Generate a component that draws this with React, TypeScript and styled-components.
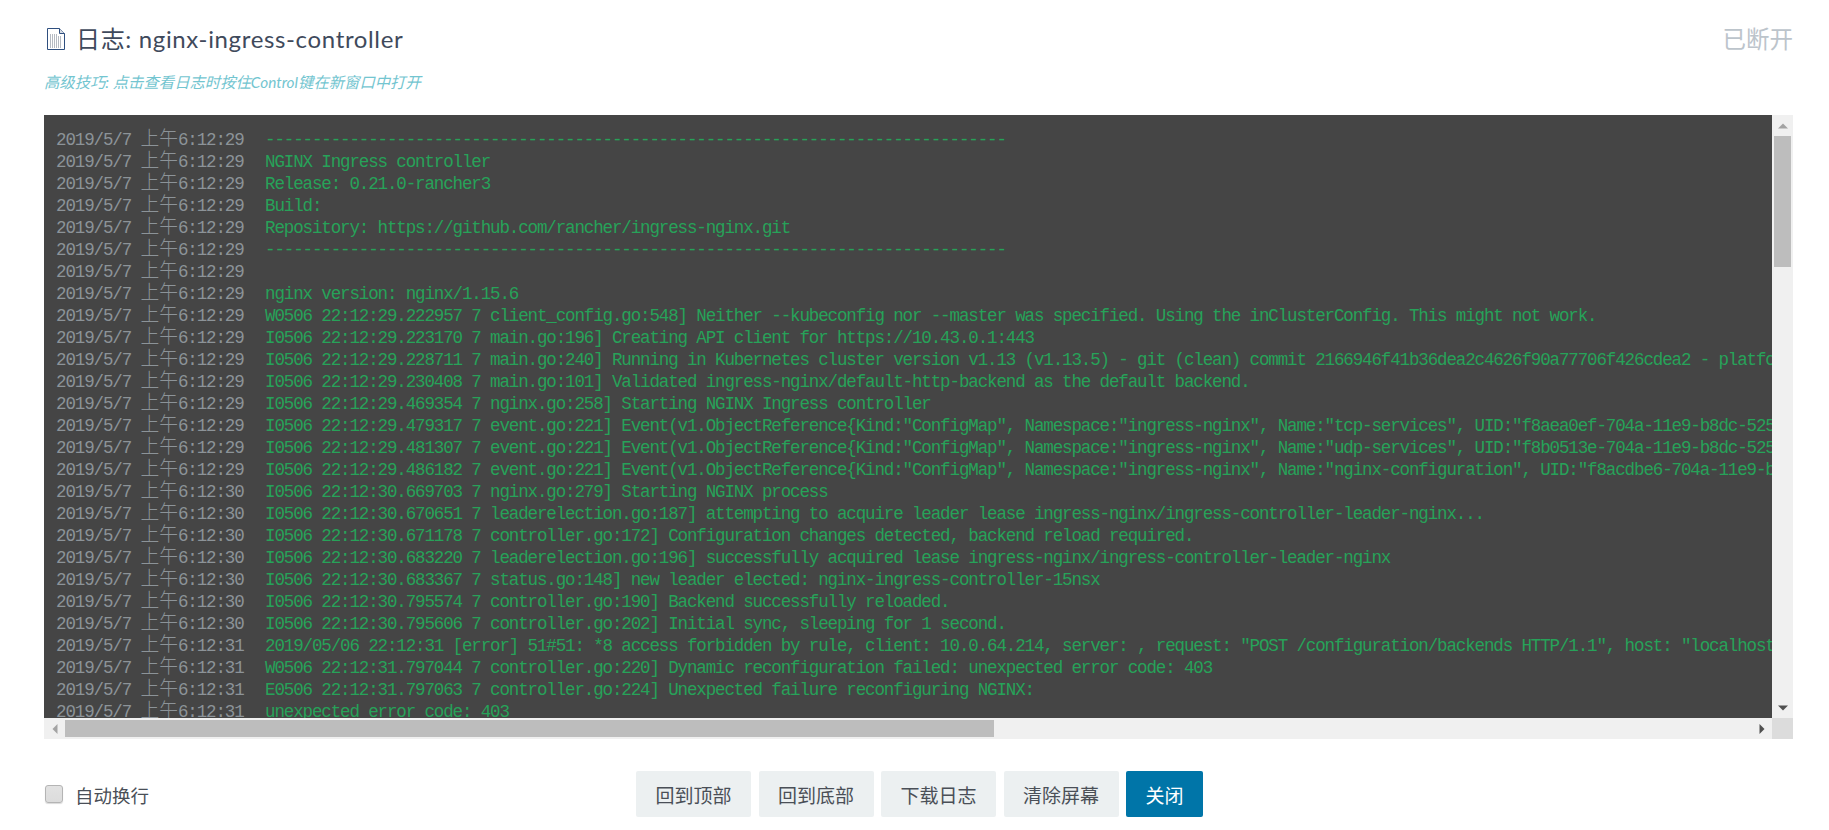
import React from 'react';
import styled, { createGlobalStyle } from 'styled-components';

const CJK = '"Noto Sans CJK SC"';

const GlobalStyle = createGlobalStyle`
  html, body {
    margin: 0;
    padding: 0;
    background: #fff;
  }
`;

const Page = styled.div`
  width: 1829px;
  height: 830px;
  box-sizing: border-box;
  padding: 0 36px 0 44px;
  overflow: hidden;
  font-family: Lato, ${CJK}, sans-serif;
`;

const Header = styled.header`
  height: 70px;
  display: flex;
  align-items: flex-end;
  justify-content: space-between;
  padding-bottom: 17px;
  box-sizing: border-box;
`;

const Title = styled.h1`
  margin: 0;
  padding-left: 3px;
  display: flex;
  align-items: center;
  gap: 11px;
  font-size: 24px;
  font-weight: 400;
  line-height: 28px;
  letter-spacing: 0.65px;
  color: #3f4a5c;
`;

const Status = styled.span`
  font-size: 23.5px;
  line-height: 28px;
  color: #bcc4cb;
`;

const Hint = styled.p`
  margin: 3px 0 0;
  height: 18px;
  font-size: 15.35px;
  line-height: 18px;
  font-style: italic;
  color: #73c5d0;
`;

const LogFrame = styled.div`
  margin-top: 24px;
  display: grid;
  grid-template-columns: 1728px 21px;
  grid-template-rows: 603px 21px;
  width: 1749px;
`;

const LogBody = styled.div`
  background: #454545;
  overflow: hidden;
  padding: 14px 0 0 12px;
  box-sizing: border-box;
`;

const Row = styled.div`
  display: flex;
  height: 22px;
  line-height: 22px;
  white-space: pre;
  font-family: "Liberation Mono", ${CJK}, monospace;
  font-size: 17.5px;
  letter-spacing: -1.125px;
`;

const Stamp = styled.span`
  flex: none;
  width: 209px;
  color: #8c9398;
`;

const Meridiem = styled.span`
  font-size: 18.75px;
  font-weight: 300;
  letter-spacing: 0;
`;

const Message = styled.span`
  color: #27a259;
`;

const ScrollTrack = styled.div<{ $vertical?: boolean }>`
  background: #f0f0f0;
  display: flex;
  flex-direction: ${(p) => (p.$vertical ? 'column' : 'row')};
  align-items: center;
`;

const ScrollArrow = styled.div<{ $vertical?: boolean }>`
  flex: none;
  width: ${(p) => (p.$vertical ? '17px' : '21px')};
  height: ${(p) => (p.$vertical ? '21px' : '17px')};
  display: flex;
  align-items: center;
  justify-content: center;
`;

const ScrollThumb = styled.div<{ $length: number; $vertical?: boolean }>`
  flex: none;
  background: #bdbdbd;
  ${(p) =>
    p.$vertical
      ? `width: 17px; height: ${p.$length}px;`
      : `height: 17px; width: ${p.$length}px;`}
`;

const Spacer = styled.div`
  flex: 1;
`;

const ScrollCorner = styled.div`
  background: #dcdcdc;
`;

const Footer = styled.footer`
  display: flex;
  align-items: flex-start;
  padding-top: 32px;
`;

const WrapToggle = styled.label`
  flex: none;
  width: 592px;
  display: flex;
  align-items: center;
  gap: 12px;
  padding-top: 12px;
  padding-left: 1px;
  box-sizing: border-box;
  font-size: 18.5px;
  line-height: 26px;
  color: #4a4f57;
`;

const CheckBox = styled.span`
  flex: none;
  width: 18px;
  height: 18px;
  margin-top: -5px;
  box-sizing: border-box;
  border: 1px solid #b4b4b4;
  border-radius: 3px;
  background: linear-gradient(#e2e2e2, #dcdcdc);
  box-shadow: 0 1px 1px rgba(0, 0, 0, 0.15);
`;

const Buttons = styled.div`
  display: flex;
  gap: 7.5px;
`;

const Button = styled.button<{ $primary?: boolean }>`
  height: 46px;
  padding: 0 19.5px;
  border: none;
  border-radius: 2px;
  font-family: Lato, ${CJK}, sans-serif;
  font-size: 19px;
  background: ${(p) => (p.$primary ? '#0075a8' : '#ecf0f1')};
  color: ${(p) => (p.$primary ? '#fff' : '#4a4f57')};
`;

const DocIcon = () => (
  <svg width="18" height="22" viewBox="0 0 18 22" fill="none">
    <path d="M.5.5h12l5 5v16H.5z" fill="#fff" stroke="#2f4f7f" />
    <path d="M12.5.5v5h5" fill="#d5dbe4" stroke="#2f4f7f" />
    <path
      d="M3 7h8M3 9h12M3 11h12M3 13h12M3 15h12M3 17h12M3 19h12"
      stroke="#6d7685"
      strokeDasharray="1 1"
    />
  </svg>
);

const Tri = ({ d, fill }: { d: string; fill: string }) => (
  <svg width="10" height="10" viewBox="0 0 10 10">
    <path d={d} fill={fill} />
  </svg>
);

const dashes = '-'.repeat(79);

const rows: [string, string][] = [
  ['29', dashes],
  ['29', 'NGINX Ingress controller'],
  ['29', 'Release: 0.21.0-rancher3'],
  ['29', 'Build:'],
  ['29', 'Repository: https://github.com/rancher/ingress-nginx.git'],
  ['29', dashes],
  ['29', ''],
  ['29', 'nginx version: nginx/1.15.6'],
  ['29', 'W0506 22:12:29.222957 7 client_config.go:548] Neither --kubeconfig nor --master was specified. Using the inClusterConfig. This might not work.'],
  ['29', 'I0506 22:12:29.223170 7 main.go:196] Creating API client for https://10.43.0.1:443'],
  ['29', 'I0506 22:12:29.228711 7 main.go:240] Running in Kubernetes cluster version v1.13 (v1.13.5) - git (clean) commit 2166946f41b36dea2c4626f90a77706f426cdea2 - platform linux/amd64'],
  ['29', 'I0506 22:12:29.230408 7 main.go:101] Validated ingress-nginx/default-http-backend as the default backend.'],
  ['29', 'I0506 22:12:29.469354 7 nginx.go:258] Starting NGINX Ingress controller'],
  ['29', 'I0506 22:12:29.479317 7 event.go:221] Event(v1.ObjectReference{Kind:"ConfigMap", Namespace:"ingress-nginx", Name:"tcp-services", UID:"f8aea0ef-704a-11e9-b8dc-525400000000"'],
  ['29', 'I0506 22:12:29.481307 7 event.go:221] Event(v1.ObjectReference{Kind:"ConfigMap", Namespace:"ingress-nginx", Name:"udp-services", UID:"f8b0513e-704a-11e9-b8dc-525400000000"'],
  ['29', 'I0506 22:12:29.486182 7 event.go:221] Event(v1.ObjectReference{Kind:"ConfigMap", Namespace:"ingress-nginx", Name:"nginx-configuration", UID:"f8acdbe6-704a-11e9-b8dc-525400000000"'],
  ['30', 'I0506 22:12:30.669703 7 nginx.go:279] Starting NGINX process'],
  ['30', 'I0506 22:12:30.670651 7 leaderelection.go:187] attempting to acquire leader lease ingress-nginx/ingress-controller-leader-nginx...'],
  ['30', 'I0506 22:12:30.671178 7 controller.go:172] Configuration changes detected, backend reload required.'],
  ['30', 'I0506 22:12:30.683220 7 leaderelection.go:196] successfully acquired lease ingress-nginx/ingress-controller-leader-nginx'],
  ['30', 'I0506 22:12:30.683367 7 status.go:148] new leader elected: nginx-ingress-controller-15nsx'],
  ['30', 'I0506 22:12:30.795574 7 controller.go:190] Backend successfully reloaded.'],
  ['30', 'I0506 22:12:30.795606 7 controller.go:202] Initial sync, sleeping for 1 second.'],
  ['31', '2019/05/06 22:12:31 [error] 51#51: *8 access forbidden by rule, client: 10.0.64.214, server: , request: "POST /configuration/backends HTTP/1.1", host: "localhost:18080"'],
  ['31', 'W0506 22:12:31.797044 7 controller.go:220] Dynamic reconfiguration failed: unexpected error code: 403'],
  ['31', 'E0506 22:12:31.797063 7 controller.go:224] Unexpected failure reconfiguring NGINX:'],
  ['31', 'unexpected error code: 403'],
];

const App: React.FC = () => (
  <Page>
    <GlobalStyle />
    <Header>
      <Title>
        <DocIcon />
        日志: nginx-ingress-controller
      </Title>
      <Status>已断开</Status>
    </Header>
    <Hint>高级技巧: 点击查看日志时按住Control键在新窗口中打开</Hint>
    <LogFrame>
      <LogBody>
        {rows.map(([sec, msg], i) => (
          <Row key={i}>
            <Stamp>
              2019/5/7 <Meridiem>上午</Meridiem>6:12:{sec}
            </Stamp>
            <Message>{msg}</Message>
          </Row>
        ))}
      </LogBody>
      <ScrollTrack $vertical>
        <ScrollArrow $vertical>
          <Tri d="M5 2.5 10 7.5H0z" fill="#a3a3a3" />
        </ScrollArrow>
        <ScrollThumb $vertical $length={131} />
        <Spacer />
        <ScrollArrow $vertical>
          <Tri d="M0 2.5h10L5 7.5z" fill="#505050" />
        </ScrollArrow>
      </ScrollTrack>
      <ScrollTrack>
        <ScrollArrow>
          <Tri d="M2.5 5 7.5 0v10z" fill="#a3a3a3" />
        </ScrollArrow>
        <ScrollThumb $length={929} />
        <Spacer />
        <ScrollArrow>
          <Tri d="M2.5 0 7.5 5 2.5 10z" fill="#505050" />
        </ScrollArrow>
      </ScrollTrack>
      <ScrollCorner />
    </LogFrame>
    <Footer>
      <WrapToggle>
        <CheckBox />
        自动换行
      </WrapToggle>
      <Buttons>
        <Button>回到顶部</Button>
        <Button>回到底部</Button>
        <Button>下载日志</Button>
        <Button>清除屏幕</Button>
        <Button $primary>关闭</Button>
      </Buttons>
    </Footer>
  </Page>
);

export default App;
